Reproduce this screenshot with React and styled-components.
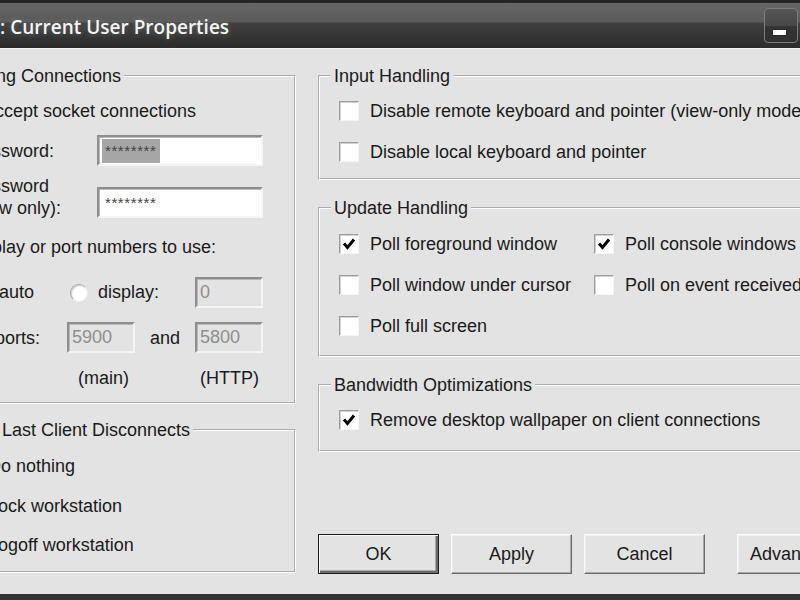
import React from 'react';
import styled, { createGlobalStyle } from 'styled-components';

const GlobalStyle = createGlobalStyle`
  html, body { margin: 0; padding: 0; background: #2b2b2b; overflow: hidden; }
  body { font-family: "Liberation Sans", Arial, sans-serif; }
  #root { width: 800px; height: 600px; overflow: hidden; }
  * { box-sizing: border-box; }
`;

const Window = styled.div`
  width: 963px;
  height: 600px;
  margin-left: -80px;
  display: flex;
  flex-direction: column;
  border-bottom: 6px solid #333;
`;

const TitleBar = styled.div`
  height: 48px;
  flex-shrink: 0;
  border-top: 3px solid #262626;
  background: linear-gradient(to bottom, #676767 0, #595959 19px, #404040 20px, #2b2b2b 45px);
  display: flex;
  align-items: center;
  justify-content: space-between;
  padding: 0 9px 0 6px;
`;

const TitleText = styled.div`
  font-family: "Open Sans", "Noto Sans", sans-serif;
  font-weight: 600;
  font-size: 19px;
  color: #f4f4f4;
  text-shadow: 0 0 6px rgba(255, 255, 255, 0.25);
  padding-top: 2px;
`;

const Controls = styled.div`
  display: flex;
  gap: 2px;
`;

const CaptionButton = styled.div`
  width: ${p => p.$w}px;
  height: 35px;
  border: 1px solid #7c7c7c;
  border-radius: 4px;
  background: linear-gradient(to bottom, #555 0, #474747 50%, #353535 51%, #2f2f2f 100%);
  display: flex;
  align-items: flex-end;
  justify-content: center;
  padding-bottom: 7px;
`;

const MinGlyph = styled.span`
  width: 13px;
  height: 5px;
  background: #fff;
  margin-right: 4px;
  box-shadow: 0 0 2px rgba(0, 0, 0, 0.6);
`;

const Body = styled.div`
  flex: 1;
  background: #e3e3e3;
  border-top: 1px solid #f3f3f3;
  display: grid;
  grid-template-columns: 359px 548px;
  column-gap: 22px;
  padding: 16px 17px 20px 17px;
  font-size: 18px;
  color: #1a1a1a;
`;

const Column = styled.div`
  display: flex;
  flex-direction: column;
  min-width: 0;
`;

const Group = styled.fieldset`
  margin: ${p => p.$mt || 0}px 0 0 0;
  border: 2px groove #fff;
  padding: 0 ${p => p.$pr || 0}px ${p => p.$pb}px 19px;
  min-width: 0;
`;

const Legend = styled.legend`
  padding: 0 3px;
  margin-left: ${p => (p.$ml === undefined ? -8 : p.$ml)}px;
  line-height: 22px;
  font-size: 18px;
  white-space: nowrap;
`;

const Row = styled.div`
  display: flex;
  align-items: ${p => (p.$top ? 'flex-start' : 'center')};
  height: ${p => p.$h || 24}px;
  margin-top: ${p => p.$mt || 0}px;
  margin-left: ${p => p.$indent || 0}px;
  white-space: nowrap;
`;

const Cell = styled.div`
  width: ${p => p.$w}px;
  flex-shrink: 0;
  line-height: 22px;
  margin-left: ${p => p.$ml || 0}px;
  text-align: ${p => p.$align || 'left'};
`;

const Option = styled.div`
  display: flex;
  align-items: center;
  gap: ${p => p.$gap}px;
  width: ${p => (p.$w ? `${p.$w}px` : 'auto')};
  flex-shrink: 0;
`;

const CheckBoxBox = styled.span`
  width: 20px;
  height: 20px;
  flex-shrink: 0;
  background: #fff;
  border: 1px solid;
  border-color: #9c9c9c #f6f6f6 #f6f6f6 #9c9c9c;
  box-shadow: inset 1px 1px 0 #d2d2d2;
  display: flex;
  align-items: center;
  justify-content: center;
`;

const RadioCircle = styled.span`
  width: 18px;
  height: 18px;
  flex-shrink: 0;
  border-radius: 50%;
  background: #fff;
  border: 1px solid;
  border-color: #a4a4a4 #ededed #ededed #a4a4a4;
  box-shadow: inset 1px 1px 1px #cfcfcf;
  display: flex;
  align-items: center;
  justify-content: center;
`;

const RadioDot = styled.span`
  width: 6px;
  height: 6px;
  border-radius: 50%;
  background: #111;
`;

const TextBox = styled.div`
  width: ${p => p.$w}px;
  height: 31px;
  flex-shrink: 0;
  margin-top: ${p => p.$mt || 0}px;
  background: ${p => (p.$disabled ? '#e3e3e3' : '#fff')};
  color: ${p => (p.$disabled ? '#8e8e8e' : '#222')};
  border: 2px solid;
  border-color: #8e8e8e #f4f4f4 #f4f4f4 #8e8e8e;
  box-shadow: inset 1px 1px 0 #b8b8b8;
  display: flex;
  align-items: center;
  padding-left: 3px;
  font-size: 18px;
`;

const Masked = styled.span`
  font-size: 15px;
  line-height: 24px;
  height: 24px;
  padding: 0 3px;
  letter-spacing: 0.6px;
  background: ${p => (p.$selected ? '#a6a6a6' : 'transparent')};
  color: #444;
`;

const CheckGrid = styled.div`
  display: grid;
  grid-template-columns: 255px 1fr;
  row-gap: 17px;
  margin-top: 13px;
`;

const ButtonRow = styled.div`
  margin-top: auto;
  display: flex;
  gap: 12px;
`;

const Button = styled.div`
  width: 121px;
  height: 40px;
  flex-shrink: 0;
  margin-left: ${p => (p.$spaced ? 20 : 0)}px;
  background: #e3e3e3;
  border: 1px solid;
  border-color: ${p => (p.$default ? '#1c1c1c' : '#fafafa #6a6a6a #6a6a6a #fafafa')};
  box-shadow: ${p =>
    p.$default
      ? 'inset 1px 1px 0 #fafafa, inset -2px -2px 0 #6a6a6a, inset -3px -3px 0 #a8a8a8'
      : 'inset -1px -1px 0 #a8a8a8, inset 1px 1px 0 #eeeeee'};
  display: flex;
  align-items: center;
  justify-content: center;
  font-size: 18px;
  color: #1a1a1a;
`;

function Check({ checked }) {
  return (
    <CheckBoxBox>
      {checked && (
        <svg width="14" height="14" viewBox="0 0 14 14">
          <path d="M2 6.5 L5.5 10.5 L12 2.5" fill="none" stroke="#000" strokeWidth="3" strokeLinejoin="miter" />
        </svg>
      )}
    </CheckBoxBox>
  );
}

function CheckItem({ checked, children }) {
  return (
    <Option $gap={11}>
      <Check checked={checked} />
      <span>{children}</span>
    </Option>
  );
}

function RadioItem({ checked, children, w }) {
  return (
    <Option $gap={10} $w={w}>
      <RadioCircle>{checked && <RadioDot />}</RadioCircle>
      <span>{children}</span>
    </Option>
  );
}

export default function App() {
  return (
    <>
      <GlobalStyle />
      <Window>
        <TitleBar>
          <TitleText>WinVNC: Current User Properties</TitleText>
          <Controls>
            <CaptionButton $w={34}>
              <MinGlyph />
            </CaptionButton>
            <CaptionButton $w={74} />
          </Controls>
        </TitleBar>
        <Body>
          <Column>
            <Group $pb={13} $pr={31}>
              <Legend $ml={-18}>Incoming Connections</Legend>
              <Row $mt={12} $indent={-6}>
                <CheckItem checked>Accept socket connections</CheckItem>
              </Row>
              <Row $mt={12} $h={31}>
                <Cell $ml={12} $w={127}>Password:</Cell>
                <TextBox $w={166}>
                  <Masked $selected>********</Masked>
                </TextBox>
              </Row>
              <Row $mt={9} $h={44} $top>
                <Cell $ml={12} $w={127}>
                  Password
                  <br />
                  (view only):
                </Cell>
                <TextBox $w={166} $mt={12}>
                  <Masked>********</Masked>
                </TextBox>
              </Row>
              <Row $mt={17} $h={22} $indent={8}>
                Display or port numbers to use:
              </Row>
              <Row $mt={19} $h={31} $indent={13}>
                <RadioItem checked w={99}>auto</RadioItem>
                <RadioItem w={125}>display:</RadioItem>
                <TextBox $w={68} $disabled>0</TextBox>
              </Row>
              <Row $mt={14} $h={31} $indent={37}>
                <Cell $w={72}>ports:</Cell>
                <TextBox $w={68} $disabled>5900</TextBox>
                <Cell $w={60} $align="center">and</Cell>
                <TextBox $w={68} $disabled>5800</TextBox>
              </Row>
              <Row $mt={14} $h={22} $indent={120}>
                <Cell $w={122}>(main)</Cell>
                <Cell $w={80}>(HTTP)</Cell>
              </Row>
            </Group>
            <Group $mt={15} $pb={14}>
              <Legend $ml={-11}>When Last Client Disconnects</Legend>
              <Row $mt={13} $indent={2}>
                <RadioItem checked>Do nothing</RadioItem>
              </Row>
              <Row $mt={16} $indent={2}>
                <RadioItem>Lock workstation</RadioItem>
              </Row>
              <Row $mt={15} $indent={2}>
                <RadioItem>Logoff workstation</RadioItem>
              </Row>
            </Group>
          </Column>
          <Column>
            <Group $pb={14}>
              <Legend>Input Handling</Legend>
              <Row $mt={12}>
                <CheckItem>Disable remote keyboard and pointer (view-only mode)</CheckItem>
              </Row>
              <Row $mt={17}>
                <CheckItem>Disable local keyboard and pointer</CheckItem>
              </Row>
            </Group>
            <Group $mt={17} $pb={17}>
              <Legend>Update Handling</Legend>
              <CheckGrid>
                <Row>
                  <CheckItem checked>Poll foreground window</CheckItem>
                </Row>
                <Row>
                  <CheckItem checked>Poll console windows only</CheckItem>
                </Row>
                <Row>
                  <CheckItem>Poll window under cursor</CheckItem>
                </Row>
                <Row>
                  <CheckItem>Poll on event received only</CheckItem>
                </Row>
                <Row>
                  <CheckItem>Poll full screen</CheckItem>
                </Row>
              </CheckGrid>
            </Group>
            <Group $mt={17} $pb={18}>
              <Legend>Bandwidth Optimizations</Legend>
              <Row $mt={12}>
                <CheckItem checked>Remove desktop wallpaper on client connections</CheckItem>
              </Row>
            </Group>
            <ButtonRow>
              <Button $default>OK</Button>
              <Button>Apply</Button>
              <Button>Cancel</Button>
              <Button $spaced>Advanced...</Button>
            </ButtonRow>
          </Column>
        </Body>
      </Window>
    </>
  );
}
